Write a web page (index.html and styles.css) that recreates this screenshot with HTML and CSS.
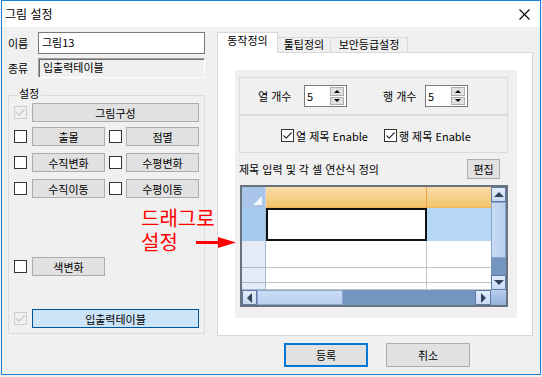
FILE: index.html
```html
<!DOCTYPE html>
<html lang="ko">
<head>
    <meta charset="UTF-8">
    <title>그림 설정</title>
    <link rel="stylesheet" href="styles.css">
</head>
<body>
    <div class="window">
        <div class="titlebar">
            <span class="title">그림 설정</span>
            <svg class="close" width="11" height="11" viewBox="0 0 11 11">
                <path d="M0.5 0.5 L10.5 10.5 M10.5 0.5 L0.5 10.5" stroke="#000" stroke-width="1.1" fill="none"/>
            </svg>
        </div>

        <div class="main">
            <div class="left">
                <div class="field">
                    <span class="field-label">이름</span>
                    <div class="textbox">그림13</div>
                </div>
                <div class="field">
                    <span class="field-label">종류</span>
                    <div class="textbox readonly">입출력테이블</div>
                </div>

                <div class="group">
                    <span class="group-title">설정</span>
                    <div class="opt-row">
                        <span class="check disabled"><svg viewBox="0 0 11 11"><path d="M1.5 5.5 L4.2 8.2 L9.5 2.5"/></svg></span>
                        <button class="btn wide">그림구성</button>
                    </div>
                    <div class="opt-row mt5">
                        <span class="check"></span>
                        <button class="btn">출몰</button>
                        <span class="check"></span>
                        <button class="btn">점멸</button>
                    </div>
                    <div class="opt-row mt7">
                        <span class="check"></span>
                        <button class="btn">수직변화</button>
                        <span class="check"></span>
                        <button class="btn">수평변화</button>
                    </div>
                    <div class="opt-row mt7">
                        <span class="check"></span>
                        <button class="btn">수직이동</button>
                        <span class="check"></span>
                        <button class="btn">수평이동</button>
                    </div>
                    <div class="opt-row mt59">
                        <span class="check"></span>
                        <button class="btn">색변화</button>
                    </div>
                    <div class="opt-row mt33">
                        <span class="check disabled"><svg viewBox="0 0 11 11"><path d="M1.5 5.5 L4.2 8.2 L9.5 2.5"/></svg></span>
                        <button class="btn wide focus">입출력테이블</button>
                    </div>
                </div>
            </div>

            <div class="right">
                <div class="tabs">
                    <div class="tab active">동작정의</div>
                    <div class="tab">툴팁정의</div>
                    <div class="tab">보안등급설정</div>
                </div>
                <div class="tab-panel">
                    <div class="sheet">
                        <div class="box counts">
                            <span class="spin-label">열 개수</span>
                            <div class="spinner">
                                <span class="spin-value">5</span>
                                <span class="spin-btns">
                                    <span class="spin-btn"><i class="arr up"></i></span>
                                    <span class="spin-btn"><i class="arr down"></i></span>
                                </span>
                            </div>
                            <span class="spin-label second">행 개수</span>
                            <div class="spinner">
                                <span class="spin-value">5</span>
                                <span class="spin-btns">
                                    <span class="spin-btn"><i class="arr up"></i></span>
                                    <span class="spin-btn"><i class="arr down"></i></span>
                                </span>
                            </div>
                        </div>
                        <div class="box checks">
                            <span class="check on"><svg viewBox="0 0 11 11"><path d="M1.5 5.5 L4.2 8.2 L9.5 2.5"/></svg></span>
                            <span class="check-text">열 제목 Enable</span>
                            <span class="check on second"><svg viewBox="0 0 11 11"><path d="M1.5 5.5 L4.2 8.2 L9.5 2.5"/></svg></span>
                            <span class="check-text">행 제목 Enable</span>
                        </div>

                        <div class="edit-row">
                            <span>제목 입력 및 각 셀 연산식 정의</span>
                            <button class="btn edit">편집</button>
                        </div>

                        <div class="grid">
                            <div class="grid-top">
                                <div class="cells">
                                    <div class="g-row head">
                                        <div class="g-corner"><span class="corner-mark"></span></div>
                                        <div class="g-col c1"></div>
                                        <div class="g-col c2"></div>
                                    </div>
                                    <div class="g-row r1">
                                        <div class="g-rh selected"></div>
                                        <div class="g-cell c1 active"></div>
                                        <div class="g-cell c2 selected"></div>
                                    </div>
                                    <div class="g-row r2">
                                        <div class="g-rh"></div>
                                        <div class="g-cell c1"></div>
                                        <div class="g-cell c2"></div>
                                    </div>
                                    <div class="g-row r3">
                                        <div class="g-rh"></div>
                                        <div class="g-cell c1"></div>
                                        <div class="g-cell c2"></div>
                                    </div>
                                    <div class="g-row r4">
                                        <div class="g-rh"></div>
                                        <div class="g-cell c1"></div>
                                        <div class="g-cell c2"></div>
                                    </div>
                                </div>
                                <div class="vscroll">
                                    <div class="sb-btn"><i class="tri up"></i></div>
                                    <div class="sb-thumb"></div>
                                    <div class="sb-track"></div>
                                    <div class="sb-btn"><i class="tri down"></i></div>
                                </div>
                            </div>
                            <div class="grid-bottom">
                                <div class="hscroll">
                                    <div class="sb-btn"><i class="tri left"></i></div>
                                    <div class="sb-thumb"></div>
                                    <div class="sb-track"></div>
                                    <div class="sb-btn wide"><i class="tri right"></i></div>
                                </div>
                                <div class="sb-corner"></div>
                            </div>
                        </div>
                    </div>
                </div>
                <div class="actions">
                    <button class="btn dialog default">등록</button>
                    <button class="btn dialog">취소</button>
                </div>
            </div>
        </div>

        <!-- annotation drawn on top of the dialog -->
        <div class="note">드래그로<br>설정</div>
        <svg class="note-arrow" width="41" height="11" viewBox="0 0 41 11">
            <rect x="0" y="4" width="23" height="3" fill="#f00"/>
            <path d="M22 0 L40 5.5 L22 11 Z" fill="#f00"/>
        </svg>
    </div>
</body>
</html>
```

FILE: styles.css
```css
* {
    box-sizing: border-box;
}

html, body {
    margin: 0;
}

body {
    background: #f0f0f0;
    font-family: "Noto Sans CJK KR", "Noto Sans", sans-serif;
    font-size: 11px;
    line-height: 14px;
    color: #000;
}

.window {
    position: relative;
    width: 540px;
    height: 375px;
    margin-left: 1px;
    border: 1px solid #1d7fd6;
    background: #f0f0f0;
}

/* title bar */
.titlebar {
    height: 26px;
    background: #fff;
    display: flex;
    align-items: center;
    justify-content: space-between;
    padding: 0 10px 0 3px;
}

.title {
    font-size: 12px;
}

/* layout */
.main {
    display: flex;
    gap: 12px;
    padding: 5px 0 0 6px;
}

.left {
    width: 197px;
}

.right {
    width: 316px;
}

/* name / type fields */
.field {
    display: flex;
    align-items: center;
}

.field + .field {
    margin-top: 4px;
}

.field-label {
    width: 30px;
}

.textbox {
    flex: 1;
    height: 22px;
    border: 1px solid #7a7a7a;
    background: #fff;
    padding: 2px 3px;
}

.textbox.readonly {
    height: 20px;
    background: #f0f0f0;
    border-color: #a0a0a0 #fff #fff #a0a0a0;
    box-shadow: inset 1px 1px 0 #6f6f6f;
    padding: 1px 4px;
}

/* group box */
.group {
    position: relative;
    margin-top: 17px;
    border: 1px solid #dcdcdc;
    padding: 7px 5px 5px 5px;
}

.group-title {
    position: absolute;
    top: -10px;
    left: 8px;
    padding: 0 2px;
    background: #f0f0f0;
}

.opt-row {
    display: flex;
    align-items: center;
    height: 19px;
}

.mt5 { margin-top: 5px; }
.mt7 { margin-top: 7px; }
.mt33 { margin-top: 33px; }
.mt59 { margin-top: 59px; }

.check {
    width: 13px;
    height: 13px;
    flex-shrink: 0;
    border: 1px solid #333;
    background: #fff;
    display: flex;
    align-items: center;
    justify-content: center;
    margin-right: 5px;
}

.check + .btn + .check {
    margin-left: 4px;
    margin-right: 4px;
}

.check svg {
    width: 11px;
    height: 11px;
}

.check path {
    fill: none;
    stroke: #333;
    stroke-width: 1.2;
}

.check.disabled {
    border-color: #cccccc;
    background: transparent;
}

.check.disabled path {
    stroke: #c8c8c8;
}

/* buttons */
.btn {
    height: 19px;
    width: 73px;
    padding: 0;
    border: 1px solid #adadad;
    background: #e1e1e1;
    font: inherit;
    color: #000;
    text-align: center;
}

.btn.wide {
    width: 168px;
}

.btn.focus {
    background: #cce4f7;
    border-color: #005499;
}

/* tabs */
.tabs {
    display: flex;
    align-items: flex-end;
    height: 20px;
}

.tab {
    height: 15px;
    border: 1px solid #d9d9d9;
    border-bottom: none;
    background: #f0f0f0;
    text-align: center;
    line-height: 13px;
    width: 53px;
}

.tab + .tab {
    border-left: none;
}

.tab:last-child {
    width: 77px;
}

.tab.active {
    position: relative;
    z-index: 1;
    width: 61px;
    height: 21px;
    margin-bottom: -1px;
    background: #fff;
    line-height: 15px;
}

.tab-panel {
    height: 284px;
    border: 1px solid #d9d9d9;
    background: #fff;
    padding: 17px 15px 17px 17px;
}

.sheet {
    height: 248px;
    background: #f0f0f0;
    padding: 7px 9px 0 4px;
}

.box {
    height: 38px;
    border: 1px solid #dcdcdc;
    display: flex;
    align-items: center;
}

.box.counts {
    padding-left: 18px;
}

.box.checks {
    padding: 3px 0 0 41px;
}

.spin-label {
    width: 46px;
}

.spin-label.second {
    width: 42px;
    margin-left: 36px;
}

.spinner {
    display: flex;
    width: 43px;
    height: 22px;
    border: 1px solid #7a7a7a;
    background: #fff;
}

.spin-value {
    flex: 1;
    padding: 3px 0 0 2px;
}

.spin-btns {
    width: 17px;
    display: flex;
    flex-direction: column;
    gap: 1px;
    padding: 1px 2px 1px 1px;
}

.spin-btn {
    flex: 1;
    background: #e1e1e1;
    border: 1px solid #adadad;
    display: flex;
    align-items: center;
    justify-content: center;
}

.arr {
    width: 0;
    height: 0;
    border-left: 3px solid transparent;
    border-right: 3px solid transparent;
}

.arr.up {
    border-bottom: 3px solid #000;
}

.arr.down {
    border-top: 3px solid #000;
}

.check.on {
    margin-right: 2px;
}

.check.on.second {
    margin-left: 16px;
}

/* edit row */
.edit-row {
    display: flex;
    align-items: center;
    justify-content: space-between;
    height: 20px;
    margin-top: 6px;
    padding-right: 8px;
}

.btn.edit {
    width: 33px;
    height: 20px;
}

/* grid */
.grid {
    width: 268px;
    height: 122px;
    margin: 6px 0 0 1px;
    border: 2px solid #69727f;
    background: #fff;
    display: flex;
    flex-direction: column;
}

.grid-top {
    height: 103px;
    display: flex;
}

.cells {
    width: 249px;
    overflow: hidden;
}

.g-row {
    display: flex;
}

.g-row.head { height: 21px; }
.g-row.r1 { height: 33px; }
.g-row.r2 { height: 27px; }
.g-row.r3 { height: 15px; }
.g-row.r4 { height: 7px; }

.g-corner,
.g-rh {
    width: 24px;
}

.c1 { width: 161px; }
.c2 { width: 64px; }

.g-corner {
    position: relative;
    background: #aac5ea;
    border-right: 1px solid #c6d7ef;
}

.corner-mark {
    position: absolute;
    right: 3px;
    bottom: 3px;
    width: 0;
    height: 0;
    border-left: 9px solid transparent;
    border-bottom: 9px solid #f4f8fd;
}

.g-col {
    background: linear-gradient(#f9dcaa, #f2c46c);
    border-bottom: 1px solid #f2b35c;
}

.g-col.c1 {
    border-right: 1px solid #f0a040;
}

.g-rh {
    background: #e4ebf6;
    border-right: 1px solid #a3b8d5;
    border-bottom: 1px solid #a3b8d5;
}

.g-rh.selected {
    background: #a6caee;
    border-bottom-color: #a6caee;
}

.g-cell {
    border-bottom: 1px solid #c4c4c4;
}

.g-cell.c1 {
    border-right: 1px solid #c4c4c4;
}

.g-cell.c2.selected {
    background: #b5d7f3;
    border-bottom-color: #b5d7f3;
}

.g-cell.active {
    border: 2px solid #111;
}

/* scrollbars */
.vscroll {
    width: 15px;
    display: flex;
    flex-direction: column;
    background: #7395c0;
}

.sb-btn {
    width: 15px;
    height: 15px;
    flex-shrink: 0;
    background: linear-gradient(#e1ecf9, #c8daf2);
    border: 1px solid #5e79a3;
    display: flex;
    align-items: center;
    justify-content: center;
}

.sb-btn.wide {
    width: 16px;
}

.vscroll .sb-thumb {
    height: 56px;
    background: linear-gradient(90deg, #cadcf4, #b8cfee);
    border: 1px solid #8aa5cd;
}

.sb-track {
    flex: 1;
}

.grid-bottom {
    height: 15px;
    display: flex;
}

.hscroll {
    width: 249px;
    display: flex;
    background: #7395c0;
}

.hscroll .sb-thumb {
    width: 86px;
    background: linear-gradient(#cadcf4, #b8cfee);
    border: 1px solid #8aa5cd;
}

.sb-corner {
    width: 15px;
    background: linear-gradient(#b8cdea, #95b2dc);
}

.tri {
    width: 0;
    height: 0;
}

.tri.up {
    border-left: 5px solid transparent;
    border-right: 5px solid transparent;
    border-bottom: 5px solid #34425f;
}

.tri.down {
    border-left: 5px solid transparent;
    border-right: 5px solid transparent;
    border-top: 5px solid #34425f;
}

.tri.left {
    border-top: 5px solid transparent;
    border-bottom: 5px solid transparent;
    border-right: 5px solid #34425f;
}

.tri.right {
    border-top: 5px solid transparent;
    border-bottom: 5px solid transparent;
    border-left: 5px solid #34425f;
}

/* dialog buttons */
.actions {
    display: flex;
    gap: 18px;
    margin-top: 7px;
    padding-left: 67px;
}

.btn.dialog {
    width: 84px;
    height: 24px;
}

.btn.default {
    border: 2px solid #0078d7;
}

/* red annotation */
.note {
    position: absolute;
    left: 139px;
    top: 205px;
    color: #f00;
    font-size: 20px;
    line-height: 24px;
}

.note-arrow {
    position: absolute;
    left: 194px;
    top: 236px;
}
```
